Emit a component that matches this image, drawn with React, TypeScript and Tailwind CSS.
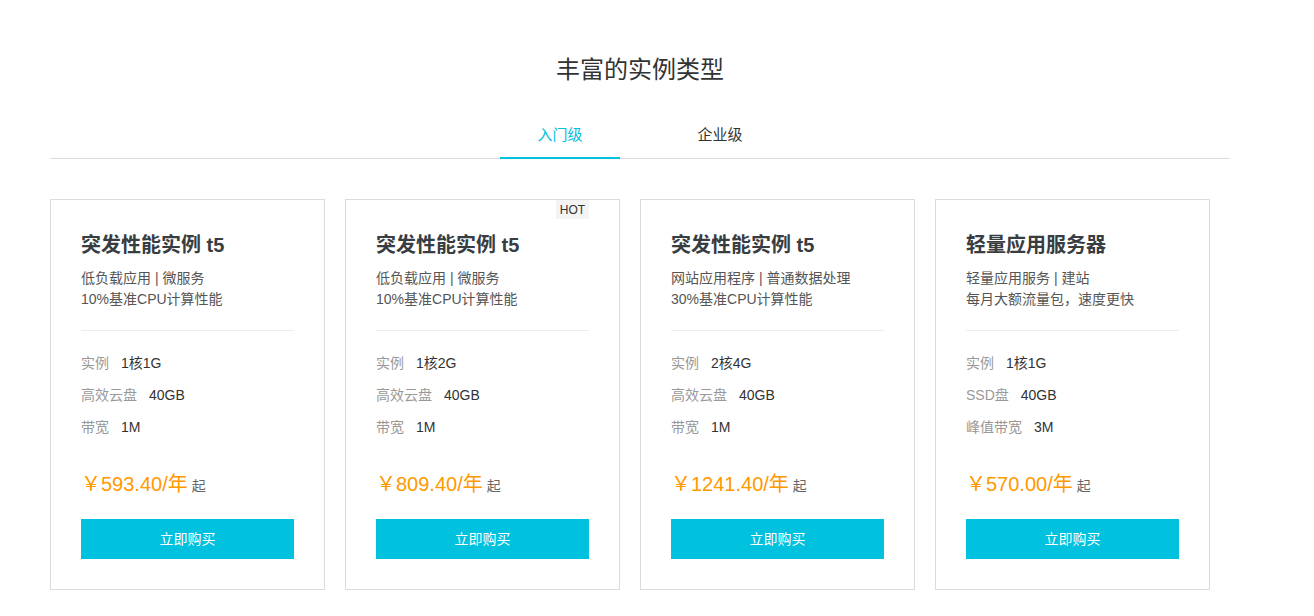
import { useState } from 'react';

type Spec = { label: string; value: string };

type Plan = {
    name: string;
    desc: string[];
    specs: Spec[];
    price: string;
    hot?: boolean;
};

const plans: Plan[] = [
    {
        name: '突发性能实例 t5',
        desc: ['低负载应用 | 微服务', '10%基准CPU计算性能'],
        specs: [
            { label: '实例', value: '1核1G' },
            { label: '高效云盘', value: '40GB' },
            { label: '带宽', value: '1M' },
        ],
        price: '593.40',
    },
    {
        name: '突发性能实例 t5',
        desc: ['低负载应用 | 微服务', '10%基准CPU计算性能'],
        specs: [
            { label: '实例', value: '1核2G' },
            { label: '高效云盘', value: '40GB' },
            { label: '带宽', value: '1M' },
        ],
        price: '809.40',
        hot: true,
    },
    {
        name: '突发性能实例 t5',
        desc: ['网站应用程序 | 普通数据处理', '30%基准CPU计算性能'],
        specs: [
            { label: '实例', value: '2核4G' },
            { label: '高效云盘', value: '40GB' },
            { label: '带宽', value: '1M' },
        ],
        price: '1241.40',
    },
    {
        name: '轻量应用服务器',
        desc: ['轻量应用服务 | 建站', '每月大额流量包，速度更快'],
        specs: [
            { label: '实例', value: '1核1G' },
            { label: 'SSD盘', value: '40GB' },
            { label: '峰值带宽', value: '3M' },
        ],
        price: '570.00',
    },
];

const tabs = ['入门级', '企业级'];

function PlanCard({ plan }: { plan: Plan }) {
    return (
        <div className="relative w-[275px] border border-[#dcdcdc] bg-white px-[30px] pt-[30px] pb-[30px]">
            {plan.hot && (
                <span className="absolute top-0 right-[30px] flex h-[19px] w-[33px] items-center justify-center bg-[#f4f4f4] text-[12px] text-[#333]">
                    HOT
                </span>
            )}
            <h3 className="text-[20px] leading-[30px] font-bold text-[#373d41]">{plan.name}</h3>
            <div className="mt-2 text-[14px] leading-[21px] text-[#555]">
                {plan.desc.map((line) => (
                    <p key={line}>{line}</p>
                ))}
            </div>
            <div className="mt-5 h-px bg-[#ececec]" />
            <ul className="mt-4">
                {plan.specs.map((spec) => (
                    <li key={spec.label} className="flex h-8 items-center gap-3 text-[14px]">
                        <span className="text-[#999]">{spec.label}</span>
                        <span className="text-[#333]">{spec.value}</span>
                    </li>
                ))}
            </ul>
            <div className="mt-[26px] flex h-[30px] items-baseline">
                <span className="text-[20px] leading-[30px] text-[#ff9900]">￥{plan.price}/年</span>
                <span className="ml-1 text-[14px] text-[#666]">起</span>
            </div>
            <button className="mt-5 flex h-10 w-full items-center justify-center bg-[#00c1de] text-[14px] text-white">
                立即购买
            </button>
        </div>
    );
}

export default function App() {
    const [active, setActive] = useState(0);

    return (
        <div className="min-h-screen bg-white font-['Liberation_Sans','Noto_Sans_CJK_SC',sans-serif]">
            <div className="ml-[50px] w-[1180px] pt-[52px]">
                <h2 className="text-center text-[24px] leading-[36px] text-[#333]">丰富的实例类型</h2>

                <div className="mt-[22px] flex justify-center gap-10 border-b border-[#dcdcdc]">
                    {tabs.map((tab, i) => (
                        <button
                            key={tab}
                            onClick={() => setActive(i)}
                            className={
                                i === active
                                    ? '-mb-px flex h-[49px] w-[120px] items-center justify-center border-b-2 border-[#00c1de] pt-[3px] text-[15px] text-[#00c1de]'
                                    : '-mb-px flex h-[49px] w-[120px] items-center justify-center border-b-2 border-transparent pt-[3px] text-[15px] text-[#333]'
                            }
                        >
                            {tab}
                        </button>
                    ))}
                </div>

                <div className="mt-10 flex gap-5">
                    {plans.map((plan, i) => (
                        <PlanCard key={i} plan={plan} />
                    ))}
                </div>
            </div>
        </div>
    );
}
